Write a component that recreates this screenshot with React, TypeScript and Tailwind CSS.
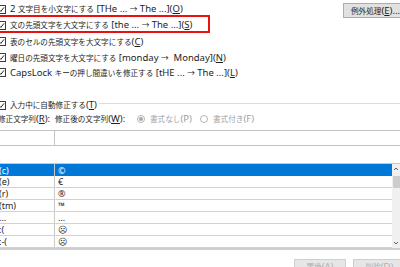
import React from "react";

const CJK = /[\u2190-\u21ff\u3000-\u9fff\uff00-\uffef]/;

function T({ s }: { s: string }) {
  const parts: React.ReactNode[] = [];
  let i = 0;
  let k = 0;
  while (i < s.length) {
    const c = s[i];
    if (c === "_") {
      parts.push(
        <u key={k++} className="text-[9.5px]">
          {s[i + 1]}
        </u>
      );
      i += 2;
      continue;
    }
    const isC = CJK.test(c);
    let j = i;
    while (j < s.length && s[j] !== "_" && CJK.test(s[j]) === isC) j++;
    const run = s.slice(i, j);
    parts.push(
      <span key={k++} className={isC ? "" : "text-[9.5px]"}>
        {run}
      </span>
    );
    i = j;
  }
  return <span className="whitespace-pre">{parts}</span>;
}

function Check() {
  return (
    <span className="-ml-[3px] mr-[4px] inline-flex h-[9px] w-[9px] shrink-0 items-center justify-center border border-[#3c3c3c] bg-white">
      <svg width="7" height="7" viewBox="0 0 7 7">
        <path d="M1 3.6 L2.8 5.4 L6 1.4" fill="none" stroke="#222" strokeWidth="1" />
      </svg>
    </span>
  );
}

function Radio({ on }: { on?: boolean }) {
  return (
    <span className="mr-[5px] inline-flex h-[8px] w-[8px] shrink-0 items-center justify-center rounded-full border border-[#b4b4b4] bg-white">
      {on && <span className="h-[4px] w-[4px] rounded-full bg-[#a8a8a8]" />}
    </span>
  );
}

const rows: [string, string][] = [
  ["(c)", "©"],
  ["(e)", "€"],
  ["(r)", "®"],
  ["(tm)", "™"],
  ["...", "…"],
  [":(", "☹"],
  [":-(", "☹"],
];

export default function App() {
  return (
    <div className="relative h-[267px] w-[400px] overflow-hidden bg-white font-['Noto_Sans','Noto_Sans_CJK_JP',sans-serif] text-[7.6px] leading-none text-[#1e1e1e]">
      <div className="flex items-start justify-between">
        <div className="flex flex-col pt-[1px]">
          <div className="flex h-[16px] items-center whitespace-nowrap">
            <Check />
            <T s="2 文字目を小文字にする [THe ... → The ...](_O)" />
          </div>
          <div className="flex h-[16px] items-center whitespace-nowrap">
            <Check />
            <T s="文の先頭文字を大文字にする [the ... → The ...](_S)" />
          </div>
          <div className="flex h-[17px] items-center whitespace-nowrap">
            <Check />
            <T s="表のセルの先頭文字を大文字にする(_C)" />
          </div>
          <div className="flex h-[15px] items-center whitespace-nowrap">
            <Check />
            <T s="曜日の先頭文字を大文字にする [monday →  Monday](_N)" />
          </div>
          <div className="flex h-[15px] items-center whitespace-nowrap">
            <Check />
            <T s="CapsLock キーの押し間違いを修正する [tHE ... → The ...](_L)" />
          </div>
        </div>
        <div className="mt-[3px] flex h-[15px] w-[57px] shrink-0 items-center whitespace-nowrap border border-[#adadad] border-r-0 bg-[#e1e1e1] pl-[7px]">
          <T s="例外処理(_E)..." />
        </div>
      </div>

      <div className="pointer-events-none absolute left-[-4px] top-[15px] h-[18px] w-[214px] border-2 border-[#e81010]" />

      <div className="mt-[19px] flex h-[12px] items-center whitespace-nowrap">
        <Check />
        <T s="入力中に自動修正する(_T)" />
        <div className="ml-[2px] mb-[4px] h-px flex-1 bg-[#dcdcdc]" />
      </div>

      <div className="mt-[2px] flex h-[12px] items-center whitespace-nowrap">
        <span className="-ml-[2px] w-[57px] shrink-0">
          <T s="修正文字列(_R):" />
        </span>
        <span className="w-[82px] shrink-0">
          <T s="修正後の文字列(_W):" />
        </span>
        <span className="flex w-[63px] shrink-0 items-center text-[#a0a0a0]">
          <Radio on />
          <T s="書式なし(P)" />
        </span>
        <span className="flex items-center text-[#a0a0a0]">
          <Radio />
          <T s="書式付き(F)" />
        </span>
      </div>

      <div className="mt-[5px] flex h-[16px] border-y border-[#c4c4c4]">
        <div className="w-[55px] shrink-0 border-r border-[#c4c4c4]" />
        <div className="flex-1" />
      </div>

      <div className="mt-[17px] flex border-t border-[#c8c8c8] border-b-2 border-b-[#cfcfcf]">
        <div className="flex flex-1 flex-col">
          {rows.map(([a, b], i) => (
            <div
              key={i}
              className={`flex h-[12px] items-center whitespace-nowrap text-[9px] ${
                i === 0 ? "bg-[#0078d7] text-white" : "border-b border-[#d2d2d2]"
              }`}
            >
              <span className="-ml-[1px] flex w-[56px] shrink-0 items-center self-stretch border-r border-[#c8c8c8]">{a}</span>
              <span className="pl-[3px]">{b}</span>
            </div>
          ))}
        </div>
        <div className="flex w-[8px] shrink-0 flex-col items-center bg-[#f0f0f0]">
          <svg width="6" height="6" viewBox="0 0 6 6" className="mt-[2px]">
            <path d="M1 4 L3 2 L5 4" fill="none" stroke="#606060" strokeWidth="1" />
          </svg>
          <div className="mt-[4px] h-[12px] w-[7px] bg-[#cdcdcd]" />
          <div className="flex-1" />
          <svg width="6" height="6" viewBox="0 0 6 6" className="mb-[2px]">
            <path d="M1 2 L3 4 L5 2" fill="none" stroke="#606060" strokeWidth="1" />
          </svg>
        </div>
      </div>

      <div className="mt-[9px] flex justify-end gap-[7px]">
        <div className="flex h-[16px] w-[52px] items-center justify-center border border-[#cfcfcf] bg-[#e6e6e6] text-[#b0b0b0]">
          <T s="置換(A)" />
        </div>
        <div className="-mr-[6px] flex h-[16px] w-[53px] items-center justify-center border border-[#cfcfcf] bg-[#e6e6e6] text-[#b0b0b0]">
          <T s="削除(D)" />
        </div>
      </div>
    </div>
  );
}
